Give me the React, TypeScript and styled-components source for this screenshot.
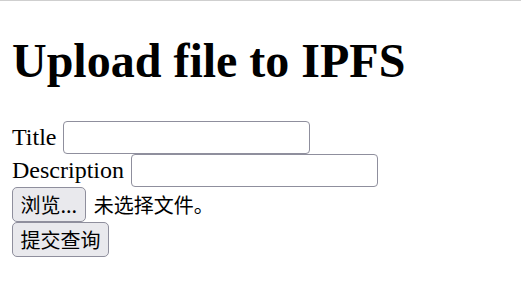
import React, { useState } from "react";
import styled, { createGlobalStyle } from "styled-components";

const GlobalStyle = createGlobalStyle`
  html, body {
    margin: 0;
    padding: 0;
    background: #ffffff;
  }
`;

const Page = styled.div`
  border-top: 1px solid #cfcfcf;
  padding: 32px 12px 0;
  font-family: "Liberation Serif", "Times New Roman", serif;
  font-size: 24px;
  color: #000;
`;

const Heading = styled.h1`
  margin: 0 0 33px;
  font-size: 48px;
  font-weight: bold;
  line-height: 55px;
`;

const Form = styled.form`
  display: flex;
  flex-direction: column;
  align-items: flex-start;
`;

const FieldRow = styled.label`
  display: flex;
  align-items: center;
  gap: 7px;
  height: 33px;
`;

const TextBox = styled.input`
  box-sizing: border-box;
  width: 247px;
  height: 33px;
  padding: 0 3px;
  border: 1.5px solid #8f8f9d;
  border-radius: 4px;
  background: #fff;
  font: 20px "Liberation Sans", sans-serif;
  outline: none;
`;

const FileRow = styled.div`
  display: flex;
  align-items: center;
  gap: 8px;
  height: 35px;
`;

const Button = styled.button`
  box-sizing: border-box;
  height: 35px;
  margin: 0;
  padding: 0 7.5px;
  border: 1.5px solid #8f8f9d;
  border-radius: 5px;
  background: #e9e9ed;
  color: #000;
  font: 20px "Noto Sans CJK SC", sans-serif;
  line-height: 1;
  cursor: default;
`;

const HiddenFile = styled.input`
  display: none;
`;

const FileName = styled.span`
  font: 20px "Noto Sans CJK SC", sans-serif;
`;

export default function App() {
  const [fileName, setFileName] = useState("");
  const fileRef = React.useRef<HTMLInputElement>(null);

  return (
    <>
      <GlobalStyle />
      <Page>
        <Heading>Upload file to IPFS</Heading>
        <Form onSubmit={(e) => e.preventDefault()}>
          <FieldRow>
            Title
            <TextBox type="text" name="title" />
          </FieldRow>
          <FieldRow>
            Description
            <TextBox type="text" name="description" />
          </FieldRow>
          <FileRow>
            <Button type="button" onClick={() => fileRef.current?.click()}>
              浏览...
            </Button>
            <FileName>{fileName || "未选择文件。"}</FileName>
            <HiddenFile
              ref={fileRef}
              type="file"
              onChange={(e) => setFileName(e.target.files?.[0]?.name ?? "")}
            />
          </FileRow>
          <Button type="submit">提交查询</Button>
        </Form>
      </Page>
    </>
  );
}
